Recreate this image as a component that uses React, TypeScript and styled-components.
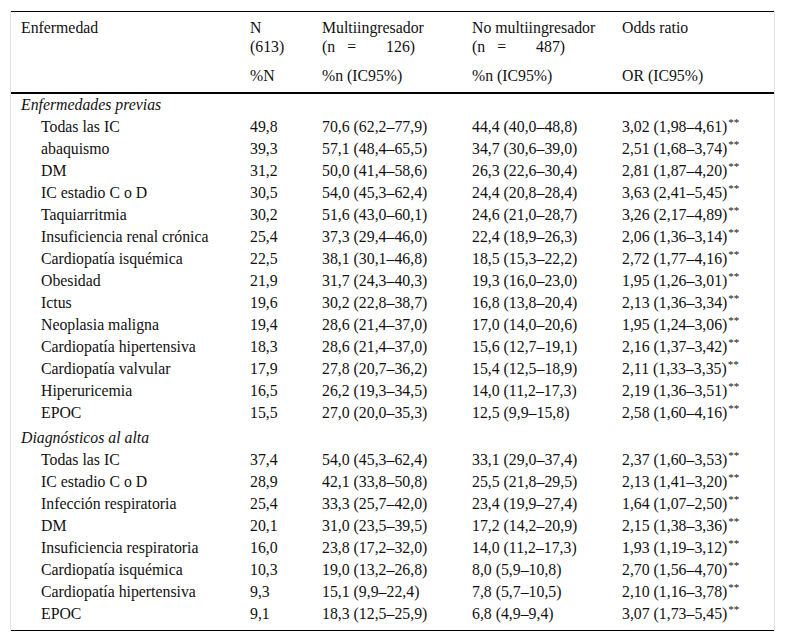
import React from "react";
import styled, { createGlobalStyle } from "styled-components";

const SERIF = `"Liberation Serif", "Times New Roman", Tinos, Times, serif`;

const GlobalStyle = createGlobalStyle`
  html, body { margin: 0; padding: 0; background: #ffffff; }
  body {
    font-family: ${SERIF};
    color: #111111;
  }
`;

const Frame = styled.div`
  margin: 11px 0 0 10px;
  width: 765px;
  box-sizing: border-box;
  border-left: 1px solid #e2e2e2;
  border-right: 1px solid #e2e2e2;
`;

const Table = styled.table`
  width: 100%;
  border-collapse: collapse;
  table-layout: fixed;
  font-family: ${SERIF};
  font-size: 15.8px;
  color: #111111;
  border-top: 1px solid #000;
  border-bottom: 1px solid #000;
`;

const HeadCell = styled.th<{ $first?: boolean; $lower?: boolean }>`
  font-family: ${SERIF};
  text-align: left;
  font-weight: normal;
  vertical-align: top;
  line-height: 19px;
  white-space: nowrap;
  padding: ${(p) => (p.$lower ? "10px 0 7px" : "6px 0 0")};
  padding-left: ${(p) => (p.$first ? "10px" : "0")};
  border-bottom: ${(p) => (p.$lower ? "2px solid #000" : "none")};
`;

const Line = styled.span`
  display: block;
`;

const Spread = styled.span`
  display: flex;
  align-items: baseline;
`;

const Gap = styled.span<{ $w: number }>`
  display: inline-block;
  width: ${(p) => p.$w}px;
`;

const SectionCell = styled.td<{ $extra?: boolean }>`
  font-family: ${SERIF};
  font-style: italic;
  line-height: 22px;
  padding: ${(p) => (p.$extra ? "3px" : "0")} 0 0 10px;
  white-space: nowrap;
`;

const Cell = styled.td<{ $label?: boolean; $last?: boolean }>`
  font-family: ${SERIF};
  line-height: 22px;
  white-space: nowrap;
  padding: 0 0 ${(p) => (p.$last ? "5px" : "0")} ${(p) => (p.$label ? "30px" : "0")};
  vertical-align: top;
`;

const Sup = styled.sup`
  font-size: 11px;
  line-height: 0;
  vertical-align: 6px;
  margin-left: 1px;
`;

type Row = [string, string, string, string, string];

const sections: { title: string; rows: Row[] }[] = [
  {
    title: "Enfermedades previas",
    rows: [
      ["Todas las IC", "49,8", "70,6 (62,2–77,9)", "44,4 (40,0–48,8)", "3,02 (1,98–4,61)"],
      ["abaquismo", "39,3", "57,1 (48,4–65,5)", "34,7 (30,6–39,0)", "2,51 (1,68–3,74)"],
      ["DM", "31,2", "50,0 (41,4–58,6)", "26,3 (22,6–30,4)", "2,81 (1,87–4,20)"],
      ["IC estadio C o D", "30,5", "54,0 (45,3–62,4)", "24,4 (20,8–28,4)", "3,63 (2,41–5,45)"],
      ["Taquiarritmia", "30,2", "51,6 (43,0–60,1)", "24,6 (21,0–28,7)", "3,26 (2,17–4,89)"],
      ["Insuficiencia renal crónica", "25,4", "37,3 (29,4–46,0)", "22,4 (18,9–26,3)", "2,06 (1,36–3,14)"],
      ["Cardiopatía isquémica", "22,5", "38,1 (30,1–46,8)", "18,5 (15,3–22,2)", "2,72 (1,77–4,16)"],
      ["Obesidad", "21,9", "31,7 (24,3–40,3)", "19,3 (16,0–23,0)", "1,95 (1,26–3,01)"],
      ["Ictus", "19,6", "30,2 (22,8–38,7)", "16,8 (13,8–20,4)", "2,13 (1,36–3,34)"],
      ["Neoplasia maligna", "19,4", "28,6 (21,4–37,0)", "17,0 (14,0–20,6)", "1,95 (1,24–3,06)"],
      ["Cardiopatía hipertensiva", "18,3", "28,6 (21,4–37,0)", "15,6 (12,7–19,1)", "2,16 (1,37–3,42)"],
      ["Cardiopatía valvular", "17,9", "27,8 (20,7–36,2)", "15,4 (12,5–18,9)", "2,11 (1,33–3,35)"],
      ["Hiperuricemia", "16,5", "26,2 (19,3–34,5)", "14,0 (11,2–17,3)", "2,19 (1,36–3,51)"],
      ["EPOC", "15,5", "27,0 (20,0–35,3)", "12,5 (9,9–15,8)", "2,58 (1,60–4,16)"],
    ],
  },
  {
    title: "Diagnósticos al alta",
    rows: [
      ["Todas las IC", "37,4", "54,0 (45,3–62,4)", "33,1 (29,0–37,4)", "2,37 (1,60–3,53)"],
      ["IC estadio C o D", "28,9", "42,1 (33,8–50,8)", "25,5 (21,8–29,5)", "2,13 (1,41–3,20)"],
      ["Infección respiratoria", "25,4", "33,3 (25,7–42,0)", "23,4 (19,9–27,4)", "1,64 (1,07–2,50)"],
      ["DM", "20,1", "31,0 (23,5–39,5)", "17,2 (14,2–20,9)", "2,15 (1,38–3,36)"],
      ["Insuficiencia respiratoria", "16,0", "23,8 (17,2–32,0)", "14,0 (11,2–17,3)", "1,93 (1,19–3,12)"],
      ["Cardiopatía isquémica", "10,3", "19,0 (13,2–26,8)", "8,0 (5,9–10,8)", "2,70 (1,56–4,70)"],
      ["Cardiopatía hipertensiva", "9,3", "15,1 (9,9–22,4)", "7,8 (5,7–10,5)", "2,10 (1,16–3,78)"],
      ["EPOC", "9,1", "18,3 (12,5–25,9)", "6,8 (4,9–9,4)", "3,07 (1,73–5,45)"],
    ],
  },
];

const CountLine: React.FC<{ n: string }> = ({ n }) => (
  <Spread>
    (n<Gap $w={12} />=<Gap $w={30} />
    {n})
  </Spread>
);

export default function App() {
  return (
    <>
      <GlobalStyle />
      <Frame>
        <Table>
          <colgroup>
            <col style={{ width: 239 }} />
            <col style={{ width: 72 }} />
            <col style={{ width: 150 }} />
            <col style={{ width: 150 }} />
            <col />
          </colgroup>
          <thead>
            <tr>
              <HeadCell $first>Enfermedad</HeadCell>
              <HeadCell>
                <Line>N</Line>
                <Line>(613)</Line>
              </HeadCell>
              <HeadCell>
                <Line>Multiingresador</Line>
                <CountLine n="126" />
              </HeadCell>
              <HeadCell>
                <Line>No multiingresador</Line>
                <CountLine n="487" />
              </HeadCell>
              <HeadCell>Odds ratio</HeadCell>
            </tr>
            <tr>
              <HeadCell $first $lower />
              <HeadCell $lower>%N</HeadCell>
              <HeadCell $lower>%n (IC95%)</HeadCell>
              <HeadCell $lower>%n (IC95%)</HeadCell>
              <HeadCell $lower>OR (IC95%)</HeadCell>
            </tr>
          </thead>
          <tbody>
            {sections.map((s, si) => (
              <React.Fragment key={s.title}>
                <tr>
                  <SectionCell colSpan={5} $extra={si > 0}>
                    {s.title}
                  </SectionCell>
                </tr>
                {s.rows.map((r, ri) => {
                  const last = si === sections.length - 1 && ri === s.rows.length - 1;
                  return (
                    <tr key={s.title + ri}>
                      <Cell $label $last={last}>{r[0]}</Cell>
                      <Cell $last={last}>{r[1]}</Cell>
                      <Cell $last={last}>{r[2]}</Cell>
                      <Cell $last={last}>{r[3]}</Cell>
                      <Cell $last={last}>
                        {r[4]}
                        <Sup>**</Sup>
                      </Cell>
                    </tr>
                  );
                })}
              </React.Fragment>
            ))}
          </tbody>
        </Table>
      </Frame>
    </>
  );
}
